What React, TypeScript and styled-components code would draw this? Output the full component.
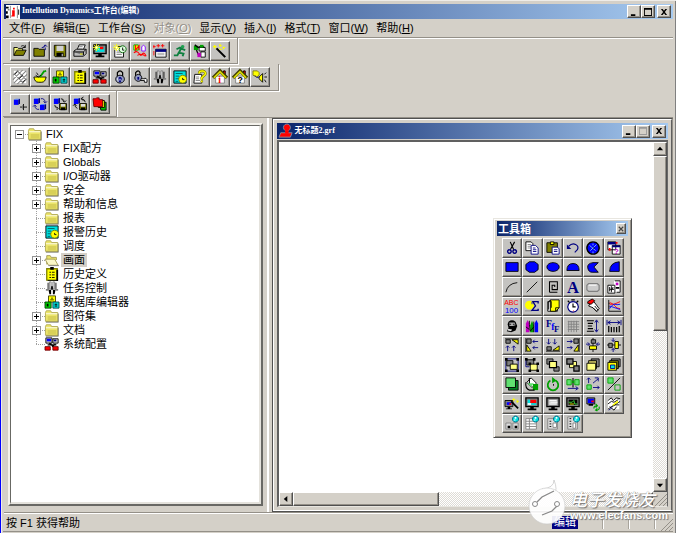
import React from "react";
import styled, { createGlobalStyle, css } from "styled-components";

const face = "#d4d0c8";
const Global = createGlobalStyle`
  *{box-sizing:border-box}
  html,body{margin:0;height:100%;overflow:hidden;background:${face}}
  body{font:11px/14px "Liberation Sans","Noto Sans CJK SC",sans-serif;color:#000}
  button{font:inherit;color:inherit;padding:0;margin:0;border:0;background:none}
  ul{list-style:none;margin:0;padding:0}
`;

/* ---------- icons: 16-unit drawings, each a list of paths and letters ---------- */
type PathShape = [fill: string, stroke: string, d: string, width?: number];
type Letter = { t: string; x: number; y: number; s: number; c: string; serif?: boolean; w?: number };
type Shape = PathShape | Letter;
const N = "none", K = "#000", B = "#0000ff", V = "#000080", Y = "#ffff00", R = "#ff0000", G = "#00a000", O = "#808000", W = "#fff", D = "#808080", C = "#00e0e0";
const PY = "#ffff80";

const block = (x: number, y: number): Shape[] => [
  [B, N, `M${x} ${y + 1}h5v6h-5z`],
  ["#5080ff", N, `M${x} ${y + 1}l2-1h5l-2 1z`],
  [V, N, `M${x + 5} ${y + 1}l2-1v5l-2 2z`],
];
const floppy = (x: number, y: number): Shape[] => [
  [O, K, `M${x}.5 ${y}.5h8v7h-8z`], [K, N, `M${x + 2} ${y + 5}h5v3h-5z`], ["#ddd", N, `M${x + 2} ${y + 1}h5v3h-5z`],
];
const monitor = (screen: string): Shape[] => [
  [D, K, "M1 1h14v10H1z", 1.5], [screen, N, "M3 3h10v6H3z"], [K, N, "M6 11h4v2h3v2H3v-2h3z"],
];
const spark: Shape[] = [[N, Y, "M4 0v8M0 4h8M1 1l6 6M7 1l-6 6"], [W, N, "M3 3h2v2H3z"]];
const globe: Shape[] = [[C, "#006080", "M12 0a3.500 3.500 0 1 0 .1 0"], [W, N, "M11 1h2v2h-2zM10 4h2v1h-2z"]];
const house: Shape[] = [
  [R, K, "M12 1h2v5h-2z"], [W, D, "M3 7h10v8H3z"], [N, "#404000", "M0 9l8-8 8 8", 4], [N, "#d8d800", "M1 9l7-7 7 7", 2],
];

const icons: Record<string, Shape[]> = {
  open: [[PY, K, "M1 13V4h4l1 1h5v3"], [O, K, "M1 13l3-6h11l-3 6z"], [N, K, "M9 3c2-2 4-1 5 1M14 1v3h-3"]],
  folderUp: [[O, K, "M1 14V5h5l1 1h6v8z"], [N, V, "M10 4c3 0 4-1 4-3M12 3l2-2 2 2M14 4v3"]],
  save: [[O, K, "M1.5 1.5h13v13h-12l-1-1z"], ["#d0d0d0", N, "M4 2h8v6H4z"], [K, N, "M4 10h8v4H4z"], [W, N, "M10 11h1v3h-1z"]],
  print: [[W, K, "M5 6l2-5h7l-2 5"], ["#bbb", K, "M1 8l3-2h11v5l-3 3H1z"], [D, K, "M1 9h11v4M12 9l3-3"], [Y, N, "M8 11h3v1H8z"], [N, D, "M7 3h4M6 5h5"]],
  monitorNew: [...monitor(C), [R, N, "M8 3h4v3H8z"], ...spark],
  schedule: [[W, K, "M4 3h8v12H2V6z"], [N, D, "M4 8h5M4 10h6M4 12h6"], ["#e0ffe0", "#006000", "M11 2a4 4 0 1 0 .1 0"], [N, K, "M11 4v3h2"], ...spark],
  recipe: [[Y, G, "M1 1h5v6H1z"], [W, "#8000ff", "M10 8V3q2-3 4 0v5z"], [N, R, "M3 1v6l4-5v5M1 10q4-3 6 1t4 0q2-2 4 3M5 13q5-3 9 1", 1.2]],
  panel: [[W, K, "M3 6h12v9H3z"], [V, N, "M3 6h12v3H3z"], ["#bbb", N, "M5 10h8v3H5z"], [N, R, "M0 3h3M1 1v4M6 0v4M4 2h4M11 0v4M9 2h4M1 8v5"]],
  runner: [["#20a050", N, "M11 1a2 2 0 1 0 .1 0"], [N, "#108040", "M14 7l-3-1-3-2-4 2M9 5l-2 5 5 1-1 3M7 9l-2 4H1", 2.2]],
  blocks3: [[G, N, "M1 2h5v5H1z"], [W, K, "M7 4h7v4H7zM9 9h5v6H9z"], [N, K, "M2 1l4 3 4-2 3 2M4 7l2 5", 1.5], ["#c000c0", N, "M5 10h4v5H5z"], [G, N, "M8 1h4v3H8z"]],
  wand: [[N, K, "M4 5l10 10", 2.4], [N, Y, "M2 1v4M0 3h4M8 0v3M7 2h3M12 3v3M11 4h3M7 6h3", 1.4]],
  hatch: [[W, N, "M1 1h14v14H1z"], [N, D, "M0 6l6-6M0 11L11 0M1 15L15 1M5 16L16 5M10 16l6-6M1 4l11 11M5 1l10 10", 1.2], [N, K, "M2 5l3-3M7 10l4-4M11 14l3-3"]],
  bowl: [[Y, K, "M1 8h14q-1 6-5 6H6q-4 0-5-6z"], [N, G, "M8 8l5-7M12 2l3-1", 2], [N, K, "M3 6l3 2 3-2M4 3l2 3"]],
  cubes: [[Y, "#404000", "M4 1h8v7H4z"], ["#00d000", "#004000", "M0 8h7v7H0z"], [C, "#004040", "M9 8h7v7H9z"], [K, N, "M7 3h2v1H7zM6 5h4v1H6zM2 10h2v3H2zM11 10h3v1h-3zM11 12h3v1h-3z"]],
  clip: [[Y, O, "M2 2h12v13H2z", 1.5], [K, N, "M6 0h4v3H6zM13 3h2v13H3v-1h10z"], [N, K, "M5 6h2M8 6h3M5 9h2M8 9h3M5 12h2M8 12h3"]],
  config: [["#ccc", K, "M1 1h7v6H1zM9 2h6v5H9z"], [B, N, "M2 2h5v3H2z"], [V, N, "M10 3h3v2h-3z"], [N, K, "M3 9h10M5 7l5 4M12 8l-4 3", 1.5], [R, "#600", "M0 11h6v4H0zM9 11h6v4H9z"]],
  lock: [[N, K, "M5 8V3q3-4 6 0v5", 1.4], ["#9098c0", K, "M8 6a5 4.500 0 1 0 .1 0"], [V, N, "M8 8a2 2 0 1 0 .1 0M7 10h2v4H7z"], [W, N, "M5 9h1v3H5z"]],
  lockKey: [[N, K, "M3 7V3q3-4 5 0v4", 1.3], ["#9098c0", K, "M6 5a4 4 0 1 0 .1 0"], [V, N, "M5 8h2v3H5z"], [W, K, "M9 10h5v-1l2 2v3h-3v-2H9z"]],
  clamps: [["#e8e8e8", D, "M5 1h2v8H5zM9 1h2v8H9z"], [K, N, "M3 2h1v8H3zM12 2h1v8h-1zM7 6h2v4H7zM4 10h3v5H5zM9 10h3l-1 5H9z"], [D, N, "M1 9h3v2H1zM12 9h3v2h-3z"]],
  history: [[C, K, "M1 1h14v14H1z"], [N, "#006060", "M3 4h8M3 7h4M3 10h4M3 13h3"], [Y, O, "M11 6a4.500 4.500 0 1 0 .1 0"], [N, K, "M11 9v2h2"]],
  helpPage: [[W, K, "M2 5h8v10H1z"], [N, D, "M3 8h4M3 10h4M3 12h5"], [N, O, "M7 4q0-3 4-3 4 1 3 4l-4 4v2M10 12v2", 3], [N, Y, "M7 4q0-3 4-3 4 1 3 4l-4 4v2M10 12v2", 1.6]],
  homeI: [...house, { t: "i", x: 6, y: 15, s: 11, c: R, serif: true }],
  homeQ: [...house, { t: "?", x: 5, y: 15, s: 10, c: K }],
  speaker: [[Y, O, "M0 1h5l2 2v3l-3 2-4-2z"], [Y, K, "M7 8l4-4v10l-4-4z"], [N, K, "M13 5l2-2M13 8h3M13 11l2 3"], [N, V, "M2 6q2 4 5 2"]],
  blockAdd: [...block(1, 2), [N, K, "M12 8v7M8 11.500h8"], [N, D, "M11 9v5"]],
  blockSwap: [...block(1, 1), ...block(8, 8), [N, V, "M9 2q4-1 5 4M12 5l2 2 2-2M7 14q-4 1-5-4M0 11l2-2 2 2"]],
  blockSave: [...block(1, 1), ...floppy(7, 7), [N, K, "M9 2q3 0 4 3M11 4l2 2 2-2M2 9q0 3 3 4M4 11l2 2-2 2"]],
  blockLoad: [...block(1, 1), ...floppy(7, 7), [N, K, "M14 6q0-3-4-4M12 0l-3 2 3 2M5 13q-3-1-3-5M0 10l2-2 2 2"]],
  stack: [["#00c000", K, "M7 6h8v9H9z"], [Y, K, "M5 4h8v8H6z"], [R, "#600", "M0 2h3l1-1h3v2h4v8H1z"]],
  folder: [["#5a5a50", N, "M1 14h13V5h1.500v10.500H1z"], ["#ece56a", "#b0a850", "M.5 14V4l1-2h5l1 2h7v10z"], [W, N, "M1 5h13v1H1z"], ["#d8d058", N, "M3 8h10v5H3z"]],
  folderOpen: [["#ece56a", "#a09850", "M2 13V3h4l1 2h6v3"], ["#fbf8c8", "#a09850", "M0 7h11l4 7H4z"], [D, N, "M4 14h12v1H4z"]],
  app: [[W, N, "M0 0h16v16H0z"], [K, N, "M0 2h3v2H0zM0 7h2v3H0zM0 12h3v3H0zM2 5h2v1H2zM14 5h1v6h-1z"], [R, N, "M8 3h2v2H8zM7 6h3v6H7zM6 12h4v1H6z"], [N, D, "M5 1v14M13 1v14"]],
  picture: [[R, "#7e93a8", "M9 0a4 4 0 1 0 .1 0M2 10h13l-2 5H0z"], [R, N, "M7 7h4v4H7z"]],
  cut: [[N, K, "M6 1l4 9M11 1L6 10", 1.3], [N, V, "M5 10a2 2 0 1 0 .1 0M11 10a2 2 0 1 0 .1 0", 1.6]],
  copy: [[W, K, "M1 1h6l2 2v8H1z"], [N, D, "M3 4h4M3 6h4M3 8h4"], [W, V, "M7 5h5l3 3v7H7z"], [N, V, "M9 8h3M9 10h4M9 12h4"]],
  paste: [[O, K, "M1 2h12v11H1z"], [Y, K, "M5 1h4v3H5z"], [W, V, "M7 7h6l2 2v6H7z"], [N, V, "M9 10h4M9 12h4"]],
  undo: [[N, V, "M3 6q4-4 8-2 4 2 2 6l-3 3", 1.3], [V, N, "M1 4v5h5z"]],
  dynamo: [[B, K, "M8 1a7 7 0 1 0 .1 0", 1.6], [N, "#80c0ff", "M4 5l7 6M12 4l-7 7M8 3v2M8 12v2"], [N, K, "M8 8h2"]],
  helpWin: [[W, K, "M1 1h9v9H1zM6 5h9v10H6z"], [V, N, "M1 1h9v3H1zM6 5h9v2H6z"], [R, N, "M10 1h2v2h-2zM2 8h2v3H2z"], { t: "?", x: 8, y: 15, s: 9, c: "#c000c0" }],
  rect: [[B, K, "M1 3h14v10H1z"]],
  rrect: [[B, K, "M5 2h6l4 3v6l-4 3H5l-4-3V5z"]],
  ellipse: [[B, K, "M8 3a7 5 0 1 0 .1 0"]],
  chord: [[B, K, "M1 12Q1 4 8 4t7 8z"]],
  pie: [[B, K, "M14 3H8Q1 4 2 9t5 5h7L9 8z"]],
  wedge: [[B, K, "M3 13Q3 3 14 2v11z"]],
  arc: [[N, K, "M1 14Q3 4 14 3"]],
  line: [[N, K, "M2 14L14 2"]],
  poly: [[N, K, "M4 14V2h9v9H7V6h3v2M4 14h9", 1.2]],
  text: [{ t: "A", x: 1, y: 15, s: 19, c: V, serif: true, w: 700 }],
  button: [["#ccc", D, "M3 4h10l2 2v5l-2 2H3l-2-2V6z", 1.4], [N, W, "M3 6h9"]],
  bitmap: [[W, N, "M1 6h8v9H1zM8 1h7v13H8z"], [N, K, "M1 6h8v9H1zM9 1h6v13h-4M3 8v5M5 7v7M7 8l-2 4"], ["#c000c0", N, "M10 3h3v3h-3z"], [K, N, "M10 8h4v2h-4zM3 10h5v1H3z"]],
  abc: [{ t: "ABC", x: -1, y: 7, s: 8, c: R, w: 400 }, { t: "100", x: 0, y: 16, s: 9, c: B, w: 400 }],
  sum: [[Y, N, "M5 2a5 5 0 1 0 .1 0"], [D, N, "M0 13h8v1H0zM7 3h2v3H7z"], [N, V, "M15 5V3H9l3 5-4 5h7v-2", 1.5]],
  note: [[W, K, "M2 3h11v11H2z"], [Y, K, "M5 1h10v9l-4 4H5z"], [N, K, "M3 12V3q2-3 3 0v7M15 10h-4v4"]],
  clock: [[W, V, "M8 3a6 6 0 1 0 .1 0", 1.4], [N, K, "M8 5v4h3M6 1h4M2 2l2 2M14 2l-2 2", 1.3], [R, N, "M8 13h1v1H8z"]],
  hand: [[W, K, "M5 5l4-2 6 8-3 3-4-4-5-2z"], [R, K, "M2 3l5-3 3 2-4 4-4-1z"], [N, K, "M8 10l5 5M10 8l4 5"]],
  chart: [[N, K, "M2 1v13h14M2 5h1M2 9h1"], [N, R, "M3 4q4 1 6 4t6 3M3 6h5l7-3"], [N, B, "M3 11q4-6 6-5t6 0M3 8l12 4"]],
  face: [[K, N, "M4 3q4-3 8 0l2 5-2 5-5 2-5-1 2-4-1-4z"], ["#b0b0b0", N, "M5 4h6l1 3-3 1H5z"], ["#ddd", N, "M3 11l5 1-1 2-4-1z"], [N, K, "M5 6h2M9 6h2"]],
  crayons: [["#c000c0", N, "M1 5l2-4 2 4v10H1z"], [G, N, "M6 7l2-5 2 5v8H6z"], [B, N, "M11 5l2-4 2 4v10h-4z"], [N, K, "M5 2v4l1 8M10 3v12M1 9l4 3M6 14l4-5"]],
  fonts: [{ t: "F", x: 0, y: 9, s: 11, c: V, serif: true }, { t: "f", x: 6, y: 12, s: 11, c: B, serif: true }, { t: "F", x: 9, y: 15, s: 10, c: V, serif: true }],
  grid: [[N, D, "M2 3h13M2 6h13M2 9h13M2 12h13M3 2v13M6 2v13M9 2v13M12 2v13"]],
  vspace: [[N, K, "M1 2h8M2 5h6M2 8h5M2 11h6M1 14h8", 1.4], [N, V, "M12 2v12M10 4l2-3 2 3M10 12l2 3 2-3"]],
  hspace: [[N, K, "M2 8v7M5 9v6M8 9v6M11 9v6M14 8v7", 1.4], [N, V, "M1 4h14M4 2L1 4l3 2M12 2l3 2-3 2M0 1v6M16 1v6"]],
  alignT: [[N, K, "M0 1h16"], [D, K, "M1 2h5v4H1z"], [Y, K, "M8 2h7v5z"], [N, V, "M3 15V9M1 11l2-2 2 2M10 15V9M8 11l2-2 2 2"]],
  alignL: [[N, K, "M1 0v16"], [D, K, "M2 1h5v5H2z"], [Y, K, "M2 8l5 7H2z"], [N, V, "M15 4H9M11 2L9 4l2 2M15 11H9M11 9l-2 2 2 2"]],
  alignB: [[N, K, "M0 15h16"], [D, K, "M1 10h5v4H1z"], [Y, K, "M8 14l7-5v5z"], [N, V, "M3 1v6M1 5l2 2 2-2M10 1v6M8 5l2 2 2-2"]],
  alignR: [[N, K, "M15 0v16"], [D, K, "M9 1h5v5H9z"], [Y, K, "M14 8v7H9z"], [N, V, "M1 4h6M5 2l2 2-2 2M1 11h6M5 9l2 2-2 2"]],
  centerV: [[N, K, "M8 0v16"], [D, K, "M6 2h5v4H6z"], [Y, K, "M4 9h8v4H4z"], [N, V, "M0 7h4M2 5l2 2-2 2M16 7h-4M14 5l-2 2 2 2"]],
  centerH: [[N, K, "M0 8h16"], [D, K, "M2 6h4v5H2z"], [Y, K, "M9 4h4v8H9z"], [N, V, "M7 0v4M5 2l2 2 2-2M7 16v-4M5 14l2-2 2 2"]],
  group: [[N, V, "M1 1h14v14H1z"], [D, K, "M2 3h7v6H2z"], [PY, K, "M6 7h8v6H6z"], [K, N, "M0 0h3v3H0zM13 0h3v3h-3zM0 13h3v3H0zM13 13h3v3h-3z"]],
  ungroup: [[D, K, "M2 2h8v6H2z"], [PY, K, "M6 7h8v7H6z"], [K, N, "M0 0h3v3H0zM9 0h3v3H9zM4 5h3v3H4zM13 5h3v3h-3zM4 13h3v3H4zM13 13h3v3h-3z"], [N, V, "M1 3v7h4"]],
  front: [[D, K, "M1 1h7v6H1zM9 10h6v5H9z"], [PY, K, "M4 4h8v7H4z", 1.4]],
  back: [[PY, K, "M4 4h8v7H4z"], [D, K, "M1 1h7v6H1zM9 9h6v6H9z", 1.4]],
  layers: [[D, K, "M6 1h9v9H6z"], ["#c8c060", K, "M3 3h9v9H3z"], [PY, K, "M1 6h10v8H1z"]],
  layers2: [[D, K, "M5 1h10v9H5z"], [O, K, "M3 3h10v9H3z"], [Y, K, "M1 5h10v9H1z"], [C, V, "M4 8h5v4H4z"]],
  duplicate: [["#008020", K, "M4 4h11v11H4z"], ["#60e070", K, "M1 1h11v11H1z"]],
  fill: [[W, K, "M2 6l5-5 6 6-5 5z"], [G, N, "M9 8h6v7H9z"], [N, K, "M5 1v7M1 6q-1 7 4 9h6", 1.3], ["#60e070", N, "M3 7h7l-3 4z"]],
  rotate: [[N, G, "M5 4a6 6 0 1 0 6 0", 2], [G, N, "M7 0l5 4-5 3z"], [K, N, "M8 8h1v2H8z"]],
  flip: [["#60e070", G, "M1 3h5v6H1zM10 3h5v6h-5z"], [N, K, "M8 1v11", 1.2], [N, V, "M2 13h11M11 11l3 2-3 2"], [G, N, "M7 4h2v3H7z"]],
  resize: [["#60e070", G, "M1 9h5v5H1z"], [N, V, "M3 7V1M1 3l2-2 2 2M8 7l6-5M10 1h4v4M8 12h7M13 10l2 2-2 2"]],
  reshape: [["#60e070", G, "M1 1h6v6H1z"], [N, K, "M1 15L15 1"], [N, G, "M9 9h6v6H9z"]],
  wizard: [[D, K, "M0 4h9v7H0z"], [B, N, "M2 6h5v3H2z"], [R, N, "M5 7h2v2H5z"], [K, N, "M3 11h3v2h2v1H1v-1h2z"], [N, K, "M7 5l8 8", 2], [N, Y, "M10 1v4M8 3h4M14 3v4M13 5h3"]],
  monRed: [...monitor(C), [R, N, "M6 3h7v4H6z"], [W, N, "M3 7h4v2H3z"]],
  monDots: [...monitor("#ccc"), [N, W, "M4 4h8M5 6h8M4 8h8"]],
  monTrend: [...monitor(K), [N, "#40e040", "M3 6h4l2-2 1 4h3"], [N, Y, "M4 8h5"]],
  monSwap: [[D, K, "M1 1h9v7H1z"], [B, N, "M2 2h7v5H2z"], [R, N, "M6 4h3v2H6z"], [K, N, "M3 8h5v2H3z"], [N, G, "M9 13q0-3 3-3M11 8l2 2-2 2M15 11q1 4-3 4M13 13l-2 2 2 1", 1.3]],
  sketch: [[W, N, "M1 2h13v12H1z"], [N, K, "M1 4l4-3 2 3 4-3 4 1M1 8l4-3 3 1 5-3M6 11l9-6M1 14l7-5 6 0M3 11l5 4 3-4"], [Y, N, "M6 9l6-5 1 2-6 4z"], [N, V, "M2 15l4-3"]],
  card1: [["#ddd", D, "M1 8h6v7H1zM9 8h6v7H9z"], [K, N, "M3 11h3v3H3zM11 11h3v3h-3z"], ...globe],
  card2: [[W, D, "M1 3h12v12H1z"], [N, D, "M1 6h12M1 9h12M1 12h12M5 3v12"], ...globe],
  card3: [["#ddd", D, "M2 3h11v12H2z"], [N, K, "M4 6h2M4 9h2M4 12h2"], [W, D, "M8 8h4v5H8z"], ...globe],
  card4: [["#ddd", D, "M2 1h11v14H2z"], [N, K, "M4 3h2M4 6h2M4 9h2M4 12h2"], [W, D, "M8 8h3v6H8z"], ...globe],
  closeSmall: [[N, "#444", "M2 2l12 12M14 2L2 14", 3]],
};

const Drawing = styled.svg<{ $size: number }>`
  display:block; flex:none; width:${p => p.$size}px; height:${p => p.$size}px; overflow:visible;
`;
function Icon({ name, size = 14 }: { name: string; size?: number }) {
  return (
    <Drawing $size={size} viewBox="0 0 16 16" aria-hidden="true">
      {icons[name].map((s, i) => Array.isArray(s)
        ? <path key={i} fill={s[0]} stroke={s[1]} d={s[2]} strokeWidth={s[3] ?? 1} />
        : <text key={i} x={s.x} y={s.y} fontSize={s.s} fill={s.c} fontWeight={s.w ?? 700}
            fontFamily={s.serif ? "Liberation Serif, serif" : "Liberation Sans, sans-serif"}>{s.t}</text>)}
    </Drawing>
  );
}

/* ---------- frame ---------- */
const raised = css`
  border:1px solid; border-color:#fff #505050 #505050 #fff; box-shadow:inset -1px -1px #949088;
`;
const Frame = styled.div`
  position:relative; display:flex; flex-direction:column; height:100vh; background:${face};
  border-left:1px solid #0000ff; padding:2px 3px 1px 2px;
  box-shadow:inset 1px 1px #eeece8, inset -1px 0 #808080;
`;
const TitleBar = styled.header<{ $inner?: boolean }>`
  display:flex; align-items:center; flex:none; height:${p => (p.$inner ? 16 : 15)}px; padding:0 2px; gap:2px;
  margin-top:${p => (p.$inner ? 0 : 2)}px; margin-left:${p => (p.$inner ? 0 : 1)}px;
  color:#fff; background:linear-gradient(90deg,#0a246a,#a6caf0);
`;
const Caption = styled.h1`
  flex:1; margin:0 0 1px; font:bold 8px/12px "Liberation Serif","Noto Sans CJK SC",serif; white-space:nowrap;
`;
const WinButtons = styled.div`display:flex; & > :last-child{margin-left:2px}`;
const WinButton = styled.button`
  ${raised} width:14px; height:13px; background:${face}; display:grid; place-items:center;
`;
const Sign = styled.svg`display:block; width:8px; height:8px;`;

const MenuBar = styled.nav`
  display:flex; align-items:center; flex:none; height:19px; padding:0 3px 0 6px; gap:8px;
  border-bottom:1px solid #949088; box-shadow:0 1px #fff;
`;
const MenuItem = styled.button`
  white-space:nowrap; line-height:16px;
  &:disabled{color:#949088; text-shadow:1px 1px #fff}
  u{text-underline-offset:1px}
`;
const Toolbar = styled.div<{ $count: number; $end: number; $height: number }>`
  display:grid; grid-template-columns:repeat(${p => p.$count},20px); align-self:flex-start; flex:none;
  height:${p => p.$height}px; padding:3px ${p => p.$end}px 2px 7px;
  border-right:1px solid #949088; border-bottom:1px solid #949088; box-shadow:1px 1px #fff;
`;
const ToolButton = styled.button`
  ${raised} display:grid; place-items:center; min-width:0; height:20px; background:#c4c3c0;
`;

/* ---------- main panes ---------- */
const Main = styled.main`
  flex:1; min-height:0; display:grid; grid-template-columns:minmax(0,2fr) minmax(0,3fr);
  border-top:1px solid #949088; border-bottom:1px solid #949088; box-shadow:0 1px #fff; margin-left:1px;
`;
const TreePane = styled.div`
  display:flex; min-height:0; padding:5px 4px 6px 4px; border-right:2px solid #fff; margin-right:3px;
`;
const TreeFrame = styled.div`
  flex:1; border:2px solid; border-color:#f4f2ec #686864 #686864 #f4f2ec; min-width:0; display:flex;
`;
const TreeBox = styled.div`
  flex:1; background:#fff; border:2px solid; border-color:#686864 #e4e2dc #e4e2dc #686864; padding-top:1px; overflow:hidden;
  border-width:1px 2px 2px 1px;
`;
const TreeRow = styled.div`display:flex; align-items:center; height:14px;`;
const Branch = styled.ul`padding-left:17px;`;
const Twig = styled.span<{ $root?: boolean; $last?: boolean }>`
  flex:none; width:17px; height:14px; padding:3px 0 0 4px;
  background:
    repeating-linear-gradient(90deg,#a0a0a0 0 1px,transparent 1px 2px) 8px 7px / 9px 1px no-repeat,
    repeating-linear-gradient(#a0a0a0 0 1px,transparent 1px 2px) 8px 0 / 1px ${p => (p.$root ? "0" : p.$last ? "8px" : "14px")} no-repeat;
`;
const Expander = styled.button`
  display:block; width:9px; height:9px; border:1px solid #949494; background:#fff;
`;
const ExpandSign = styled.svg`display:block; width:7px; height:7px;`;
const NodeName = styled.button<{ $on?: boolean }>`
  margin-left:2px; padding:0 2px; height:14px; line-height:13px; white-space:nowrap; background:${p => (p.$on ? face : "none")};
`;

const Workspace = styled.div`
  min-width:0; min-height:0; display:flex; border:1px solid; border-color:#505050 #949088 #505050 #505050;
`;
const Child = styled.section`
  flex:1; min-width:0; display:flex; flex-direction:column; padding:3px;
  border:1px solid; border-color:#fff #606060 #fff #fff;
`;
const Canvas = styled.div`
  flex:1; min-height:0; display:grid; grid-template:minmax(0,1fr) 14px / minmax(0,1fr) 14px;
  margin-top:1px; border:solid; border-color:#606060 #686868 #e8e6e0 #606060; border-width:2px 1px 1px 2px; background:${face};
`;
const Sheet = styled.div`background:#fff;`;
const Track = styled.div<{ $across?: boolean }>`
  display:flex; flex-direction:${p => (p.$across ? "row" : "column")}; min-width:0; min-height:0;
  background:repeating-conic-gradient(#fff 0 25%,#dedbd5 0 50%) 0 0 / 2px 2px;
`;
const ScrollButton = styled.button`
  ${raised} flex:none; width:14px; height:14px; background:${face}; display:grid; place-items:center;
`;
const Thumb = styled.div<{ $share: number }>`${raised} flex:${p => p.$share} 1 0; background:${face};`;
const Rest = styled.div<{ $share: number }>`flex:${p => p.$share} 1 0;`;
const Grip = styled.svg`display:block; width:12px; height:12px; align-self:end; justify-self:end;`;

/* ---------- toolbox ---------- */
const Toolbox = styled.aside`
  position:absolute; top:218px; right:44px; width:139px; height:220px; padding:2px 3px 4px;
  background:${face}; border:1px solid; border-color:#e8e6e0 #505050 #505050 #e8e6e0; box-shadow:inset 1px 1px #fff,inset -1px -1px #949088;
`;
const ToolTitle = styled.header`
  display:flex; align-items:center; height:15px; padding:0 2px 0 1px; color:#fff; background:linear-gradient(90deg,#0a246a,#a6caf0);
`;
const ToolName = styled.h2`flex:1; margin:0; font:bold 11px/15px "Noto Sans CJK SC",sans-serif;`;
const CloseTool = styled.button`${raised} width:10px; height:11px; background:${face}; display:grid; place-items:center;`;
const ToolGrid = styled.div`
  display:grid; grid-template:repeat(10,1fr) / repeat(6,1fr); width:122px; height:195px; margin:2px 0 0 5px;
`;
const ToolCell = styled.button`
  ${raised} display:grid; place-items:center; min-width:0; min-height:0; background:#c4c3c0; overflow:hidden;
`;

/* ---------- status bar and watermark ---------- */
const StatusBar = styled.footer`
  display:flex; align-items:center; flex:none; height:19px; padding-left:3px; border-bottom:1px solid #949088;
`;
const Hint = styled.span`flex:1; white-space:nowrap; padding-top:1px;`;
const Panes = styled.div`display:flex; margin-right:5px;`;
const Pane = styled.span<{ $on?: boolean }>`
  width:26px; height:13px; text-align:center; line-height:12px;
  border-right:1px solid #fff; box-shadow:inset -1px 0 #a8a49c;
  ${p => p.$on && css`color:#fff; background:${V}; border:0; box-shadow:none;`}
`;
const Watermark = styled.div`
  position:absolute; right:8px; bottom:9px; display:flex; align-items:flex-end; gap:4px;
  color:#fff; pointer-events:none;
`;
const Badge = styled.svg`flex:none; width:38px; height:44px; overflow:visible;`;
const MarkText = styled.div`
  white-space:nowrap; font:bold 11px/12px "Liberation Sans",sans-serif; text-shadow:1px 1px 1px #777,0 0 1px #888;
  padding-bottom:3px;
`;
const MarkName = styled.div`font:italic 500 17px/20px "Noto Sans CJK SC",sans-serif;`;

const signs: Record<string, string> = {
  minimize: "M1 7h5v2H1z",
  maximize: "M0 0h9v9H0zM1 2v6h7V2z",
  close: "M1 1h2l1.500 2L6 1h2L5.500 4.500 8 8H6L4.500 6 3 8H1l2.500-3.500z",
};
function Controls({ dim }: { dim?: boolean }) {
  return (
    <WinButtons>
      {["minimize", "maximize", "close"].map(n => (
        <WinButton key={n} aria-label={n}>
          <Sign viewBox="0 0 9 9"><path d={signs[n]} fillRule="evenodd" fill={dim && n === "maximize" ? "#999" : "#000"} /></Sign>
        </WinButton>
      ))}
    </WinButtons>
  );
}
function Arrow({ label, d }: { label: string; d: string }) {
  return <ScrollButton aria-label={label}><Sign viewBox="0 0 9 9"><path d={d} /></Sign></ScrollButton>;
}

const menus = [["文件", "F"], ["编辑", "E"], ["工作台", "S"], ["对象", "O"], ["显示", "V"], ["插入", "I"], ["格式", "T"], ["窗口", "W"], ["帮助", "H"]];
const bars = [
  { end: 7, height: 26, names: ["open", "folderUp", "save", "print", "monitorNew", "schedule", "recipe", "panel", "runner", "blocks3", "wand"] },
  { end: 8, height: 27, names: ["hatch", "bowl", "cubes", "clip", "config", "lock", "lockKey", "clamps", "history", "helpPage", "homeI", "homeQ", "speaker"] },
  { end: 6, height: 26, names: ["blockAdd", "blockSwap", "blockSave", "blockLoad", "stack"] },
];
type Node = { name: string; icon?: string; leaf?: boolean; on?: boolean };
const nodes: Node[] = [
  { name: "FIX配方" }, { name: "Globals" }, { name: "I/O驱动器" }, { name: "安全" }, { name: "帮助和信息" },
  { name: "报表", leaf: true }, { name: "报警历史", icon: "history", leaf: true }, { name: "调度", leaf: true },
  { name: "画面", icon: "folderOpen", on: true }, { name: "历史定义", icon: "clip", leaf: true },
  { name: "任务控制", icon: "clamps", leaf: true }, { name: "数据库编辑器", icon: "cubes", leaf: true },
  { name: "图符集" }, { name: "文档" }, { name: "系统配置", icon: "config", leaf: true },
];
const tools = (
  "cut copy paste undo dynamo helpWin rect rrect ellipse chord pie wedge arc line poly text button bitmap " +
  "abc sum note clock hand chart face crayons fonts grid vspace hspace alignT alignL alignB alignR centerV centerH " +
  "group ungroup front back layers layers2 duplicate fill rotate flip resize reshape " +
  "wizard monRed monDots monTrend monSwap sketch card1 card2 card3 card4"
).split(" ");

function TreeItem({ node, root, last, open }: { node: Node; root?: boolean; last?: boolean; open?: boolean }) {
  return (
    <TreeRow>
      <Twig $root={root} $last={last}>
        {!node.leaf && (
          <Expander aria-label={(open ? "收起 " : "展开 ") + node.name}>
            <ExpandSign viewBox="0 0 7 7"><path fill="#000" d={open ? "M1 3h5v1H1z" : "M1 3h5v1H1zM3 1h1v5H3z"} /></ExpandSign>
          </Expander>
        )}
      </Twig>
      <Icon name={node.icon ?? "folder"} size={14} />
      <NodeName $on={node.on}>{node.name}</NodeName>
    </TreeRow>
  );
}

export default function App() {
  return (
    <>
      <Global />
      <Frame>
        <TitleBar>
          <Icon name="app" />
          <Caption>Intellution Dynamics工作台(编辑)</Caption>
          <Controls />
        </TitleBar>
        <MenuBar>
          {menus.map(([name, key]) => (
            <MenuItem key={key} disabled={key === "O"}>{name}(<u>{key}</u>)</MenuItem>
          ))}
        </MenuBar>
        {bars.map((bar, i) => (
          <Toolbar key={i} role="toolbar" $count={bar.names.length} $end={bar.end} $height={bar.height}>
            {bar.names.map(n => <ToolButton key={n} aria-label={n}><Icon name={n} /></ToolButton>)}
          </Toolbar>
        ))}
        <Main>
          <TreePane>
            <TreeFrame>
              <TreeBox>
                <TreeItem node={{ name: "FIX" }} root open />
                <Branch>
                  {nodes.map((n, i) => <li key={n.name}><TreeItem node={n} last={i === nodes.length - 1} /></li>)}
                </Branch>
              </TreeBox>
            </TreeFrame>
          </TreePane>
          <Workspace>
            <Child>
              <TitleBar $inner>
                <Icon name="picture" />
                <Caption as="h2">无标题2.grf</Caption>
                <Controls dim />
              </TitleBar>
              <Canvas>
                <Sheet />
                <Track>
                  <Arrow label="up" d="M1 6l3.500-4L8 6z" />
                  <Thumb $share={176} /><Rest $share={149} />
                  <Arrow label="down" d="M1 3l3.500 4L8 3z" />
                </Track>
                <Track $across>
                  <Arrow label="left" d="M6 1L2 4.500 6 8z" />
                  <Thumb $share={145} /><Rest $share={201} />
                  <Arrow label="right" d="M3 1l4 3.500L3 8z" />
                </Track>
                <Grip viewBox="0 0 12 12"><path stroke="#949088" d="M0 12L12 0M4 12l8-8M8 12l4-4" /></Grip>
              </Canvas>
            </Child>
          </Workspace>
        </Main>
        <StatusBar>
          <Hint>按 F1 获得帮助</Hint>
          <Panes><Pane $on>编辑</Pane><Pane /><Pane /><Pane /></Panes>
          <Grip viewBox="0 0 12 12"><path stroke="#949088" d="M0 12L12 0M4 12l8-8M8 12l4-4" /></Grip>
        </StatusBar>
        <Toolbox aria-label="工具箱">
          <ToolTitle>
            <ToolName>工具箱</ToolName>
            <CloseTool aria-label="close"><Icon name="closeSmall" size={6} /></CloseTool>
          </ToolTitle>
          <ToolGrid>
            {tools.map(n => <ToolCell key={n} aria-label={n}><Icon name={n} /></ToolCell>)}
          </ToolGrid>
        </Toolbox>
        <Watermark>
          <Badge viewBox="0 0 38 44">
            <path fill="#fff" stroke="#bbb" strokeWidth=".6" d="M26 0q4 10 0 14L14 9q12-1 12-9z" />
            <circle cx="19" cy="26" r="18" fill="#fff" fillOpacity=".92" stroke="#c8c8c8" strokeWidth=".6" />
            <path fill="none" stroke="#888" strokeWidth="1.300" d="M9 22L14 17L26 11M29 26L24 31L14 35" />
            <circle cx="7" cy="24" r="2.500" fill="#fff" stroke="#888" /><circle cx="29" cy="24" r="2.500" fill="#fff" stroke="#888" />
          </Badge>
          <MarkText><MarkName>电子发烧友</MarkName>www.elecfans.com</MarkText>
        </Watermark>
      </Frame>
    </>
  );
}
